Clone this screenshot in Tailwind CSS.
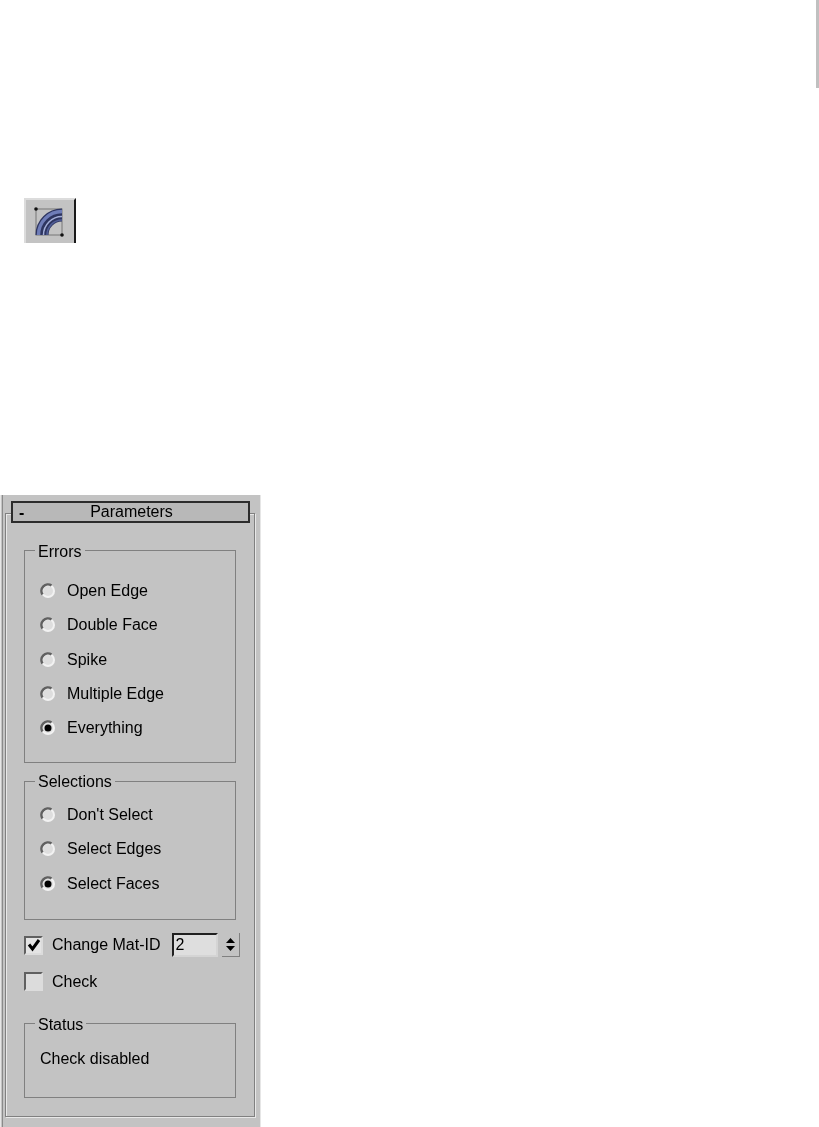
<!DOCTYPE html>
<html>
<head>
<meta charset="utf-8">
<script src="https://cdn.jsdelivr.net/npm/@tailwindcss/browser@4"></script>
</head>
<body class="bg-white m-0 w-[819px] h-[1127px] overflow-hidden font-['Liberation_Sans',Arial,sans-serif] text-[16px] leading-[18px] text-black">
  <div class="flex justify-end h-[88px]"><div class="w-[3px] h-[88px] shrink-0 bg-[#c0c0c0]"></div></div>

  <div class="mt-[110px] ml-[24px] w-[52px] h-[45px] bg-[#c3c3c3] border-t-2 border-l-2 border-t-[#dcdcdc] border-l-[#dcdcdc] border-r-2 border-r-[#1a1a1a] blur-[0.6px]">
    <svg width="48" height="43" viewBox="0 0 48 43" class="block">
      <rect x="10" y="9" width="26" height="26" fill="none" stroke="#777" stroke-width="1"/>
      <path d="M16 35 A20 20 0 0 1 36 15" fill="none" stroke="#2e3560" stroke-width="13"/>
      <path d="M12.500 35 A23.500 23.500 0 0 1 36 11.500" fill="none" stroke="#6f7db8" stroke-width="3.500"/>
      <path d="M17.500 35 A18.500 18.500 0 0 1 36 16.500" fill="none" stroke="#a4afd8" stroke-width="1.500"/>
      <path d="M21 35 A15 15 0 0 1 36 20" fill="none" stroke="#525f98" stroke-width="1.500"/>
      <circle cx="10" cy="9" r="1.800" fill="#111"/>
      <circle cx="36" cy="35" r="1.800" fill="#111"/>
    </svg>
  </div>

  <div class="mt-[252px] w-[261px] h-[632px] bg-[#c3c3c3] pt-[6px] relative blur-[0.4px]">
    <div class="absolute left-0 top-0 bottom-0 w-[3px] border-l border-l-[#e6e6e6] border-r border-r-[#8a8a8a]"></div>
    <div class="absolute right-0 top-0 bottom-0 w-[3px] border-r border-r-[#e6e6e6]"></div>

    <div class="relative z-10 mx-[11px] h-[22px] border-2 border-[#2c2c2c] bg-[#b8b8b8] flex items-center -mb-[10px]">
      <span class="absolute left-[6px] top-[1px] font-bold">-</span>
      <span class="w-full text-center pl-[2px]">Parameters</span>
    </div>

    <div class="mx-[5px] w-[250px] h-[604px] border border-[#808080] shadow-[inset_1px_1px_0_#e8e8e8,1px_1px_0_#e8e8e8] pt-[27px] px-[18px]">
      <fieldset class="border border-[#808080] w-[212px] h-[222px] px-[15px] pt-[23px]">
        <legend class="-ml-[5px] px-[3px] relative top-[2px]">Errors</legend>
        <div class="flex flex-col gap-[16.300px]">
          <div class="flex items-center gap-[11px] h-[18px]"><svg width="16" height="16" viewBox="0 0 16 16" class="shrink-0"><circle cx="8" cy="8" r="7" fill="#f2f2f2"/><circle cx="8" cy="8" r="5" fill="#dedede"/><path d="M2.500 11.500 A6.500 6.500 0 0 1 11.500 2.500" fill="none" stroke="#606060" stroke-width="2.500"/></svg><span>Open Edge</span></div>
          <div class="flex items-center gap-[11px] h-[18px]"><svg width="16" height="16" viewBox="0 0 16 16" class="shrink-0"><circle cx="8" cy="8" r="7" fill="#f2f2f2"/><circle cx="8" cy="8" r="5" fill="#dedede"/><path d="M2.500 11.500 A6.500 6.500 0 0 1 11.500 2.500" fill="none" stroke="#606060" stroke-width="2.500"/></svg><span>Double Face</span></div>
          <div class="flex items-center gap-[11px] h-[18px]"><svg width="16" height="16" viewBox="0 0 16 16" class="shrink-0"><circle cx="8" cy="8" r="7" fill="#f2f2f2"/><circle cx="8" cy="8" r="5" fill="#dedede"/><path d="M2.500 11.500 A6.500 6.500 0 0 1 11.500 2.500" fill="none" stroke="#606060" stroke-width="2.500"/></svg><span>Spike</span></div>
          <div class="flex items-center gap-[11px] h-[18px]"><svg width="16" height="16" viewBox="0 0 16 16" class="shrink-0"><circle cx="8" cy="8" r="7" fill="#f2f2f2"/><circle cx="8" cy="8" r="5" fill="#dedede"/><path d="M2.500 11.500 A6.500 6.500 0 0 1 11.500 2.500" fill="none" stroke="#606060" stroke-width="2.500"/></svg><span>Multiple Edge</span></div>
          <div class="flex items-center gap-[11px] h-[18px]"><svg width="16" height="16" viewBox="0 0 16 16" class="shrink-0"><circle cx="8" cy="8" r="7" fill="#f2f2f2"/><circle cx="8" cy="8" r="5" fill="#dedede"/><path d="M2.500 11.500 A6.500 6.500 0 0 1 11.500 2.500" fill="none" stroke="#606060" stroke-width="2.500"/><circle cx="8" cy="8" r="3.500" fill="#000"/></svg><span>Everything</span></div>
        </div>
      </fieldset>

      <fieldset class="border border-[#808080] w-[212px] h-[148px] mt-[9px] px-[15px] pt-[16px]">
        <legend class="-ml-[5px] px-[3px] relative top-[1px]">Selections</legend>
        <div class="flex flex-col gap-[16.300px]">
          <div class="flex items-center gap-[11px] h-[18px]"><svg width="16" height="16" viewBox="0 0 16 16" class="shrink-0"><circle cx="8" cy="8" r="7" fill="#f2f2f2"/><circle cx="8" cy="8" r="5" fill="#dedede"/><path d="M2.500 11.500 A6.500 6.500 0 0 1 11.500 2.500" fill="none" stroke="#606060" stroke-width="2.500"/></svg><span>Don't Select</span></div>
          <div class="flex items-center gap-[11px] h-[18px]"><svg width="16" height="16" viewBox="0 0 16 16" class="shrink-0"><circle cx="8" cy="8" r="7" fill="#f2f2f2"/><circle cx="8" cy="8" r="5" fill="#dedede"/><path d="M2.500 11.500 A6.500 6.500 0 0 1 11.500 2.500" fill="none" stroke="#606060" stroke-width="2.500"/></svg><span>Select Edges</span></div>
          <div class="flex items-center gap-[11px] h-[18px]"><svg width="16" height="16" viewBox="0 0 16 16" class="shrink-0"><circle cx="8" cy="8" r="7" fill="#f2f2f2"/><circle cx="8" cy="8" r="5" fill="#dedede"/><path d="M2.500 11.500 A6.500 6.500 0 0 1 11.500 2.500" fill="none" stroke="#606060" stroke-width="2.500"/><circle cx="8" cy="8" r="3.500" fill="#000"/></svg><span>Select Faces</span></div>
        </div>
      </fieldset>

      <div class="flex items-center w-[216px] h-[24px] mt-[13px]">
        <div class="w-[19px] h-[19px] shrink-0 bg-[#e4e4e4] border-2 border-t-[#606060] border-l-[#606060] border-r-[#dcdcdc] border-b-[#dcdcdc] flex items-center justify-center">
          <svg width="14" height="14" viewBox="0 0 14 14"><path d="M2 6.500 L5.500 11 L12 2" fill="none" stroke="#000" stroke-width="3"/></svg>
        </div>
        <span class="ml-[9px] whitespace-nowrap">Change Mat-ID</span>
        <div class="ml-[11px] w-[46px] h-[24px] shrink-0 bg-[#dedede] border-2 border-t-[#202020] border-l-[#202020] border-r-[#d4d4d4] border-b-[#d4d4d4] pl-[2px] leading-[20px]">2</div>
        <div class="ml-[4px] w-[18px] h-[24px] shrink-0 flex flex-col items-center justify-center gap-[3px] bg-[#c3c3c3] border-r border-b border-r-[#808080] border-b-[#808080]">
          <svg width="9" height="5" viewBox="0 0 9 5" class="block"><path d="M4.500 0 L9 5 L0 5 Z" fill="#000"/></svg>
          <svg width="9" height="5" viewBox="0 0 9 5" class="block"><path d="M0 0 L9 0 L4.500 5 Z" fill="#000"/></svg>
        </div>
      </div>

      <div class="flex items-center h-[19px] mt-[15px]">
        <div class="w-[19px] h-[19px] bg-[#dcdcdc] border-2 border-t-[#606060] border-l-[#606060] border-r-[#dcdcdc] border-b-[#dcdcdc]"></div>
        <span class="ml-[9px]">Check</span>
      </div>

      <fieldset class="border border-[#808080] w-[212px] h-[84px] mt-[23px] px-[15px] pt-[18px]">
        <legend class="-ml-[5px] px-[3px] relative top-[2px]">Status</legend>
        <div>Check disabled</div>
      </fieldset>
    </div>
  </div>
</body>
</html>
